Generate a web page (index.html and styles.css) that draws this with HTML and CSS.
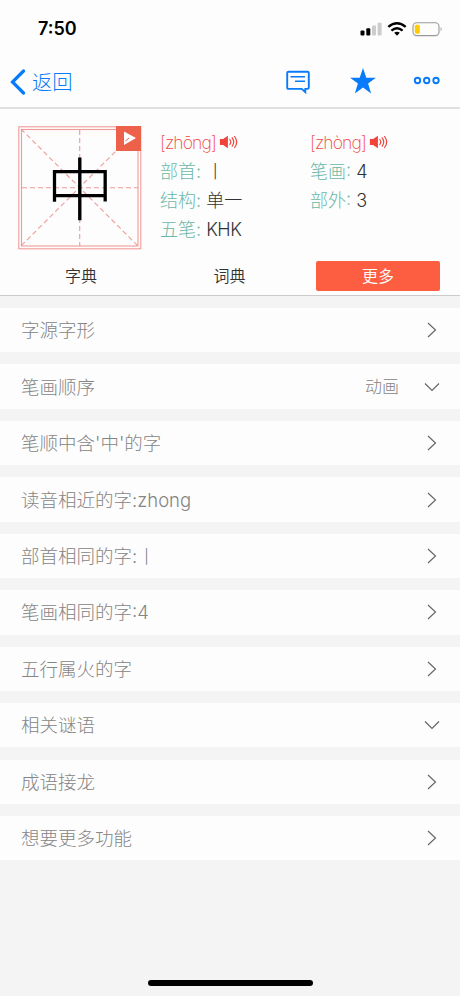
FILE: index.html
```html
<!DOCTYPE html>
<html lang="zh-CN">
<head>
<meta charset="utf-8">
<title>中</title>
<link rel="stylesheet" href="styles.css">
</head>
<body>
<svg class="defs" width="0" height="0">
  <symbol id="right" viewBox="0 0 16 16"><path d="M4 1l7.5 7L4 15" /></symbol>
  <symbol id="down" viewBox="0 0 16 16"><path d="M1 4.500l7 7 7-7" /></symbol>
  <symbol id="speaker" viewBox="0 0 20 16">
    <path class="solid" d="M1.500 5.600h3L8.300 3v10l-3.800-2.600h-3z" />
    <path d="M10.800 5.500q2 2.500 0 5M13.200 3.800q3 4.200 0 8.400M15.600 2.500q4.200 5.500 0 11" />
  </symbol>
</svg>
<header class="top">
  <div class="status">
    <span class="time">7:50</span>
    <svg class="signals" width="83" height="16" viewBox="0 0 83 16">
      <rect x="0.500" y="9.500" width="4" height="5" rx="1" />
      <rect x="6.300" y="7.300" width="4" height="7.200" rx="1" />
      <rect x="12" y="4.500" width="4" height="10" rx="1" fill="#ccc" />
      <rect x="17.600" y="1.800" width="4" height="12.700" rx="1" fill="#ccc" />
      <g fill="none" stroke="#000" stroke-width="2.400">
        <path d="M28.300 5.800q8.700-7.200 17.400 0M31.400 9.600q5.600-4.700 11.200 0" />
      </g>
      <path d="M34.200 11.800q2.800-2 5.600 0l-2.800 3z" />
      <rect x="53" y="1.800" width="26" height="12.800" rx="3.600" fill="none" stroke="#999" stroke-width="1.100" />
      <rect x="54.800" y="3.700" width="5" height="9" rx="1.600" fill="#fc0" />
      <path d="M80.700 6q2 2.200 0 4.400z" fill="#999" />
    </svg>
  </div>
  <nav class="nav">
    <a class="back">
      <svg width="16" height="26" viewBox="0 0 16 26"><path d="M13.500 2L2.500 13l11 11" /></svg>
      <span>返回</span>
    </a>
    <svg class="tools" width="155" height="28" viewBox="0 0 155 28">
      <path class="line" d="M2.500 3.800h19q1.300 0 1.300 1.300v14.500q0 1.300-1.300 1.300h-2.200v3.300L15.700 20.900H2.500q-1.300 0-1.300-1.300V5.100q0-1.300 1.300-1.300z" />
      <path class="line thin" d="M4.500 8.800h14.500M9 13.300h10" />
      <path class="fill" d="M77 0l3.300 9.700h9.600l-7.800 5.900 3 9.800L77 19.500l-8.100 5.900 3-9.800-7.800-5.900h9.600z" />
      <g class="line"><circle cx="131.500" cy="12.500" r="2.700" /><circle cx="140.700" cy="12.500" r="2.700" /><circle cx="150" cy="12.500" r="2.700" /></g>
    </svg>
  </nav>
</header>
<section class="entry">
  <div class="grid">
    <svg width="124" height="124" viewBox="0 0 124 124">
      <rect x="0.800" y="0.800" width="122" height="122" />
      <rect x="3.500" y="3.500" width="116.500" height="116.500" />
      <path stroke-dasharray="5 3" d="M3 3l117 117M120 3L3 120M61.700 4v116M4 61.700h116" />
    </svg>
    <span class="glyph">中</span>
    <span class="play"><svg width="25" height="25" viewBox="0 0 25 25"><path d="M8 5.500l12 6.500L8 19z" /><path class="nick" d="M9.500 15l3.500-3" /></svg></span>
  </div>
  <div class="facts">
    <div class="pinyin">[zhōng]<svg class="speaker"><use href="#speaker" /></svg></div>
    <div class="pinyin">[zhòng]<svg class="speaker"><use href="#speaker" /></svg></div>
    <div><b>部首:</b> <span class="radical">丨</span></div>
    <div><b>笔画:</b> 4</div>
    <div><b>结构:</b> 单一</div>
    <div><b>部外:</b> 3</div>
    <div><b>五笔:</b> <span class="code">KHK</span></div>
  </div>
</section>
<div class="tabs">
  <span>字典</span><span>词典</span><span class="active">更多</span>
</div>
<main class="list">
  <div class="row"><span>字源字形</span><svg class="chev"><use href="#right" /></svg></div>
  <div class="row"><span>笔画顺序</span><span class="value">动画</span><svg class="chev"><use href="#down" /></svg></div>
  <div class="row"><span>笔顺中含'中'的字</span><svg class="chev"><use href="#right" /></svg></div>
  <div class="row"><span>读音相近的字:zhong</span><svg class="chev"><use href="#right" /></svg></div>
  <div class="row"><span>部首相同的字:丨</span><svg class="chev"><use href="#right" /></svg></div>
  <div class="row"><span>笔画相同的字:4</span><svg class="chev"><use href="#right" /></svg></div>
  <div class="row"><span>五行属火的字</span><svg class="chev"><use href="#right" /></svg></div>
  <div class="row"><span>相关谜语</span><svg class="chev"><use href="#down" /></svg></div>
  <div class="row"><span>成语接龙</span><svg class="chev"><use href="#right" /></svg></div>
  <div class="row"><span>想要更多功能</span><svg class="chev"><use href="#right" /></svg></div>
</main>
<footer class="home"><span></span></footer>
</body>
</html>
```
FILE: styles.css
```css
* { box-sizing: border-box; }
body {
  margin: 0;
  height: 996px;
  overflow: hidden;
  display: flex;
  flex-direction: column;
  background: #f4f4f4;
  font-family: Inter, "Noto Sans CJK SC", sans-serif;
  font-weight: 300;
}
.defs { position: absolute; }
.top { height: 109px; background: #fdfdfd; border-bottom: 2px solid #e0e0e0; }
.status {
  height: 56px;
  padding: 2px 17px 0 38px;
  display: flex;
  align-items: center;
  justify-content: space-between;
}
.time { font-size: 18px; font-weight: 600; line-height: 22px; }
.nav {
  height: 51px;
  padding: 1px 15px 0 10px;
  display: flex;
  align-items: center;
  justify-content: space-between;
}
.back { display: flex; align-items: center; gap: 6px; color: #087bfa; font-size: 20.300px; line-height: 26px; }
.back span { padding-top: 1px; }
.back svg { fill: none; stroke: #087bfa; stroke-width: 3.200; stroke-linecap: round; }
.tools { margin-right: 4px; }
.tools .line { fill: none; stroke: #087bfa; stroke-width: 1.900; }
.tools .thin { stroke-width: 1.500; }
.tools .fill { fill: #087bfa; }
.entry {
  height: 148px;
  padding: 17px 0 0 18px;
  display: flex;
  gap: 18px;
  background: #fdfdfd;
}
.grid { position: relative; width: 124px; height: 124px; }
.grid > svg { display: block; fill: none; stroke: #ef9b98; stroke-width: 1.100; }
.glyph {
  position: absolute;
  inset: 2px 0 0;
  text-align: center;
  font-size: 68px;
  line-height: 124px;
  color: #000;
  font-weight: 300;
}
.play { position: absolute; top: 0; right: 1px; width: 25px; height: 25px; background: #ed6049; }
.play svg { display: block; fill: #fff; }
.play .nick { stroke: #ed6049; stroke-width: 1; }
.facts {
  padding-top: 1.500px;
  display: grid;
  grid-template-columns: 150px 1fr;
  grid-auto-rows: 29.300px;
  align-content: start;
  font-size: 18px;
  line-height: 29px;
  color: #333;
  white-space: nowrap;
}
.facts b { color: #6cb7a5; font-weight: 300; }
.facts .code { letter-spacing: -0.500px; }
.facts .pinyin { display: flex; align-items: center; gap: 3px; color: #f0443a; letter-spacing: -0.900px; font-weight: 200; font-size: 17.500px; }
.speaker { width: 20px; height: 16px; fill: none; stroke: #f0443a; stroke-width: 1.200; }
.speaker, .solid { stroke-linecap: round; }
.solid { fill: #f0443a; }
.tabs {
  height: 39px;
  padding: 4px 20px 0 19px;
  display: grid;
  grid-template-columns: 124px 124px 124px;
  justify-content: space-between;
  align-items: start;
  background: #fdfdfd;
  border-bottom: 1px solid #ccc;
  font-size: 16px;
  line-height: 30px;
  text-align: center;
  color: #333;
  font-weight: 350;
}
.tabs .active { background: #fd5e42; color: #fff; border-radius: 2px; }
.list { margin-top: 12px; display: grid; grid-auto-rows: 44.400px; gap: 12.050px; }
.row {
  padding: 0 20px 0 21px;
  display: flex;
  align-items: center;
  background: #fdfdfd;
  color: #858585;
  font-size: 18.500px;
  line-height: 28px;
}
.chev { width: 16px; height: 16px; margin-left: auto; fill: none; stroke: #666; stroke-width: 1.200; }
.value { margin-left: auto; font-size: 17px; }
.value + .chev { margin-left: 25px; }
.home { margin-top: auto; height: 17px; display: flex; justify-content: center; }
.home span { width: 165px; height: 6px; margin-top: 1px; border-radius: 3px; background: #000; }
```
